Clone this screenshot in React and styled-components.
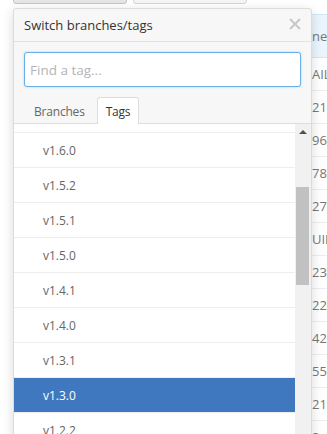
import { useLayoutEffect, useRef } from 'react';
import styled, { createGlobalStyle } from 'styled-components';

const GlobalStyle = createGlobalStyle`
  html, body {
    margin: 0;
    padding: 0;
    background: #fff;
    overflow: hidden;
    font-family: "Open Sans", "Noto Sans", "Liberation Sans", sans-serif;
    color: #333;
  }
`;

// Background page
const Page = styled.div`
  position: relative;
  display: flow-root;
  width: 327px;
  height: 434px;
  padding-left: 13px;
  box-sizing: border-box;
  overflow: hidden;
`;

const Toolbar = styled.div`
  display: flex;
  gap: 6px;
  margin-top: -25px;
  height: 29px;
`;

const ToolButton = styled.div`
  width: ${p => p.$width}px;
  height: 29px;
  box-sizing: border-box;
  border: 1px solid ${p => (p.$active ? '#c5c5c5' : '#d5d5d5')};
  border-radius: 3px;
  background: ${p => (p.$active ? '#e6e6e6' : '#f5f5f5')};
`;

const Table = styled.div`
  margin-top: 10px;
  width: 400px;
  border-top: 1px solid #d4e5f2;
`;

const HeaderRow = styled.div`
  display: flex;
  align-items: center;
  height: 42px;
  background: #eaf5fd;
  border-bottom: 1px solid #d8e6f0;
`;

const Row = styled.div`
  display: flex;
  align-items: center;
  height: 32px;
  border-bottom: 1px solid #eee;
`;

const MessageCell = styled.div`
  width: 299px;
  flex: none;
`;

const ShaCell = styled.div`
  font-size: 13px;
  color: #777;
  white-space: nowrap;
`;

// Popup
const Popup = styled.div`
  position: absolute;
  top: 8px;
  left: 13px;
  width: 299px;
  height: 460px;
  box-sizing: border-box;
  background: #f7f7f7;
  border: 1px solid #dcdcdc;
  border-radius: 3px;
  box-shadow: 0 3px 12px rgba(0, 0, 0, 0.15);
  display: flex;
  flex-direction: column;
  overflow: hidden;
`;

const PopupHeader = styled.div`
  display: flex;
  align-items: center;
  justify-content: space-between;
  height: 32px;
  padding: 0 10px 0 10px;
  border-bottom: 1px solid #e2e2e2;
  font-size: 13px;
  color: #333;
`;

const Close = styled.svg`
  width: 12px;
  height: 12px;
  margin-top: -2px;
`;

const FilterBox = styled.div`
  padding: 10px;
`;

const Input = styled.input`
  width: 100%;
  height: 35px;
  box-sizing: border-box;
  border: 1px solid #66afe9;
  border-radius: 3px;
  padding: 0 5px;
  font-family: inherit;
  font-size: 13.5px;
  outline: none;
  box-shadow: 0 0 2px rgba(81, 167, 232, 0.5);
  &::placeholder { color: #b4b4b4; }
`;

const Tabs = styled.div`
  display: flex;
  align-items: flex-end;
  padding-left: 11px;
  height: 26px;
  border-bottom: 1px solid #ddd;
`;

const Tab = styled.div`
  height: 27px;
  box-sizing: border-box;
  padding: 0 8px;
  display: flex;
  align-items: center;
  font-size: 12px;
  letter-spacing: -0.2px;
  color: ${p => (p.$selected ? '#333' : '#666')};
  background: ${p => (p.$selected ? '#fff' : 'transparent')};
  border: 1px solid ${p => (p.$selected ? '#ddd' : 'transparent')};
  border-bottom: none;
  border-radius: 3px 3px 0 0;
  margin-bottom: -1px;
  margin-right: 3px;
`;

const ListArea = styled.div`
  flex: 1;
  display: flex;
  background: #fff;
  min-height: 0;
`;

const List = styled.div`
  flex: 1;
  overflow-y: scroll;
  scrollbar-width: none;
  &::-webkit-scrollbar { display: none; }
`;

const Item = styled.div`
  height: 34px;
  border-bottom: 1px solid #eee;
  display: flex;
  align-items: center;
  padding-left: 29px;
  font-size: 12px;
  color: ${p => (p.$selected ? '#fff' : '#666')};
  background: ${p => (p.$selected ? '#4078c0' : '#fff')};
`;

const Scrollbar = styled.div`
  width: 16px;
  flex: none;
  background: #f1f1f1;
`;

const Arrow = styled.div`
  width: 0;
  height: 0;
  margin: 6px auto 0;
  border-left: 4px solid transparent;
  border-right: 4px solid transparent;
  border-bottom: 4px solid #505050;
`;

const Thumb = styled.div`
  margin: 53px 2px 0 1px;
  height: 98px;
  background: #c1c1c1;
`;

const tags = [
  'v1.7.0', 'v1.6.2', 'v1.6.1', 'v1.6.0', 'v1.5.2', 'v1.5.1', 'v1.5.0',
  'v1.4.1', 'v1.4.0', 'v1.3.1', 'v1.3.0', 'v1.2.2', 'v1.2.1', 'v1.2.0',
  'v1.1.0', 'v1.0.1', 'v1.0.0', 'v0.9.0', 'v0.8.0', 'v0.7.0',
];

const shas = ['AIL', '210', '967', '781', '279', 'UIL', '238', '221', '421', '551', '210', '2a0'];

export default function App() {
  const listRef = useRef(null);

  useLayoutEffect(() => {
    if (listRef.current) listRef.current.scrollTop = 96;
  }, []);

  return (
    <>
      <GlobalStyle />
      <Page>
        <Toolbar>
          <ToolButton $width={114} $active />
          <ToolButton $width={114} />
        </Toolbar>
        <Table>
          <HeaderRow>
            <MessageCell />
            <ShaCell>net</ShaCell>
          </HeaderRow>
          {shas.map((s, i) => (
            <Row key={i}>
              <MessageCell />
              <ShaCell>{s}</ShaCell>
            </Row>
          ))}
        </Table>

        <Popup>
          <PopupHeader>
            <span>Switch branches/tags</span>
            <Close viewBox="0 0 12 12">
              <path d="M1 1 L11 11 M11 1 L1 11" stroke="#c8c8c8" strokeWidth="2" />
            </Close>
          </PopupHeader>
          <FilterBox>
            <Input placeholder="Find a tag..." />
          </FilterBox>
          <Tabs>
            <Tab>Branches</Tab>
            <Tab $selected>Tags</Tab>
          </Tabs>
          <ListArea>
            <List ref={listRef}>
              {tags.map(t => (
                <Item key={t} $selected={t === 'v1.3.0'}>{t}</Item>
              ))}
            </List>
            <Scrollbar>
              <Arrow />
              <Thumb />
            </Scrollbar>
          </ListArea>
        </Popup>
      </Page>
    </>
  );
}
